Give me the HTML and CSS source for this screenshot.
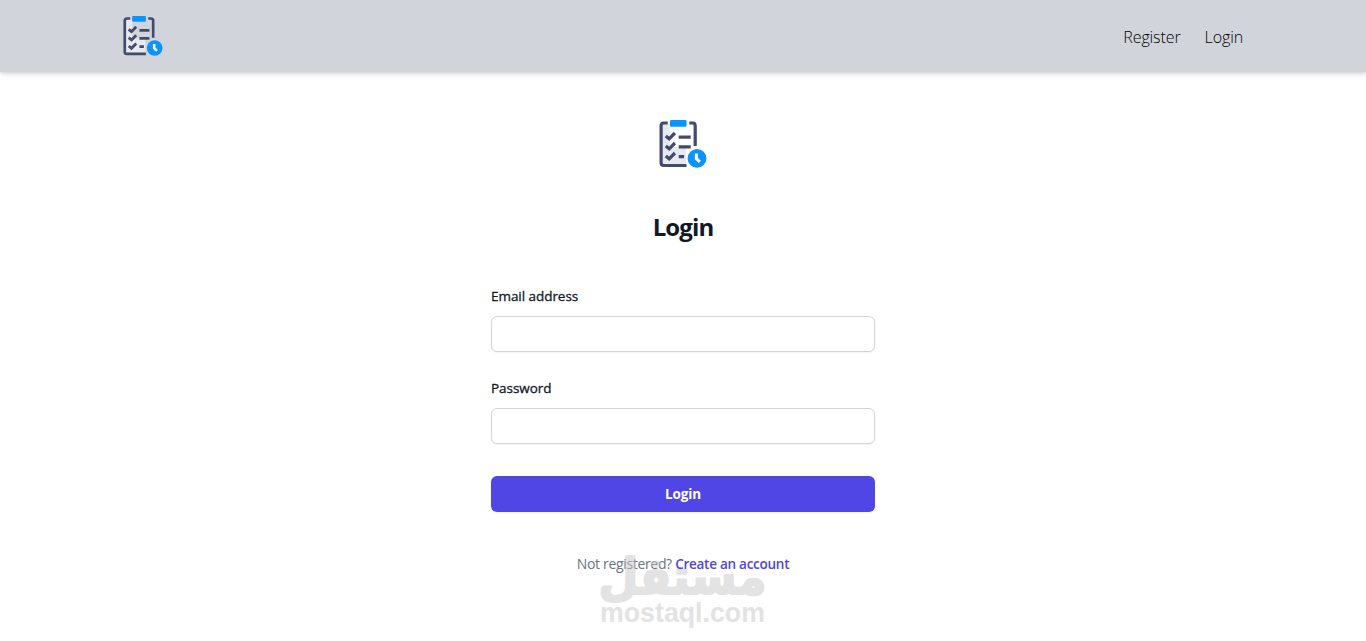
FILE: index.html
```
<!DOCTYPE html>
<html lang="en">
<head>
    <meta charset="UTF-8">
    <meta name="viewport" content="width=device-width, initial-scale=1.0">
    <title>Login</title>
    <link rel="stylesheet" href="styles.css">
</head>
<body>
    <svg class="sprite" aria-hidden="true">
        <symbol id="logo" viewBox="0 0 48 48">
            <path d="M3 4h8v23h16v17H3z" fill="#e6e9ee"/>
            <path d="M8.7 3H4.8Q2.1 3 2.1 5.7V42.8Q2.1 45.5 4.8 45.5H27.5M30.3 3H33.5Q36.2 3 36.2 5.7V26" fill="none" stroke="#414b6e" stroke-width="3.2"/>
            <rect x="11" y="0" width="16.5" height="6.8" rx="1.2" fill="#0a94ff"/>
            <path d="M6.8 16l3.4 2.8 5.7-5.8M6.8 26l3.4 2.8 5.7-5.8M6.8 36l3.4 2.8 5.7-5.8M19.7 17.2h12M19.7 26.8h12M19.7 36.7h5.4" fill="none" stroke="#414b6e" stroke-width="3.3"/>
            <circle cx="38" cy="38.4" r="9.4" fill="#0a94ff"/>
            <path d="M37.4 33.6v5l3.4 3.2" fill="none" stroke="#fff" stroke-width="3"/>
        </symbol>
    </svg>

    <header class="header">
        <div class="header-inner">
            <a href="#" class="header-logo" aria-label="Home"><svg><use href="#logo"/></svg></a>
            <nav class="nav">
                <a href="#">Register</a>
                <a href="#">Login</a>
            </nav>
        </div>
    </header>

    <main class="login">
        <svg class="login-logo"><use href="#logo"/></svg>
        <h2>Login</h2>
        <form class="form">
            <div class="field">
                <label for="email">Email address</label>
                <input id="email" type="email">
            </div>
            <div class="field">
                <label for="password">Password</label>
                <input id="password" type="password">
            </div>
            <button type="button" class="button">Login</button>
        </form>
        <p class="signup"><span>Not registered?</span> <a href="#">Create an account</a></p>
    </main>

    <!-- Watermark -->
    <svg class="watermark" viewBox="0 0 170 80">
        <text class="watermark-ar" transform="translate(82.5 43) scale(1 1.08)" text-anchor="middle">مستقل</text>
        <text class="watermark-en" x="0" y="71" textLength="165" lengthAdjust="spacingAndGlyphs">mostaql.com</text>
    </svg>
</body>
</html>
```
FILE: styles.css
```
* {
    box-sizing: border-box;
}

body {
    margin: 0;
    height: 641px;
    overflow: hidden;
    position: relative;
    font-family: "Open Sans", "Noto Sans", sans-serif;
    background-color: #fff;
    color: #111827;
}

a {
    color: inherit;
    text-decoration: none;
}

.sprite {
    position: absolute;
    width: 0;
    height: 0;
}

.header {
    height: 72px;
    background-color: #d1d5db;
    box-shadow: 0 1px 3px rgba(0, 0, 0, 0.1), 0 4px 6px -1px rgba(0, 0, 0, 0.1);
}

.header-inner {
    width: 1120px;
    height: 72px;
    margin: 0 auto;
    display: flex;
    justify-content: space-between;
    align-items: center;
}

.header-logo svg {
    display: block;
    width: 40px;
    height: 40px;
}

.nav {
    display: flex;
    gap: 24px;
    padding-top: 2px;
    font-size: 16px;
    font-weight: 300;
    line-height: 24px;
    letter-spacing: -0.1px;
    color: #000;
}

.login {
    width: 384px;
    margin: 0 auto;
    padding-top: 48px;
}

.login-logo {
    display: block;
    width: 48px;
    height: 48px;
    margin: 0 auto;
}

h2 {
    margin: 41px 0 0;
    font-size: 24px;
    line-height: 36px;
    font-weight: 700;
    letter-spacing: -0.9px;
    text-align: center;
}

.form {
    margin-top: 39px;
    display: flex;
    flex-direction: column;
    gap: 24px;
}

.field {
    display: flex;
    flex-direction: column;
    gap: 8px;
}

label {
    font-size: 13.5px;
    line-height: 24px;
    font-weight: 500;
    letter-spacing: -0.05px;
    -webkit-text-stroke: 0.3px;
}

input {
    height: 36px;
    padding: 6px 12px;
    border: 1px solid #d1d5db;
    border-radius: 6px;
    box-shadow: 0 1px 2px rgba(0, 0, 0, 0.05);
    outline: none;
}

.button {
    height: 36px;
    margin-top: 8px;
    padding: 0;
    border: none;
    border-radius: 6px;
    background-color: #4f46e5;
    color: #fff;
    font-family: inherit;
    font-size: 13.5px;
    line-height: 24px;
    font-weight: 700;
    letter-spacing: -0.1px;
    box-shadow: 0 1px 2px rgba(0, 0, 0, 0.05);
}

.signup {
    margin: 40px 0 0;
    font-size: 14px;
    line-height: 24px;
    letter-spacing: -0.33px;
    text-align: center;
    color: #6b7280;
}

.signup a {
    font-size: 13.5px;
    font-weight: 600;
    letter-spacing: -0.26px;
    color: #4f46e5;
}

.watermark {
    position: absolute;
    left: 600px;
    top: 551px;
    width: 170px;
    height: 80px;
    overflow: visible;
    fill: #c8c8c8;
    opacity: 0.5;
    pointer-events: none;
}

.watermark-ar {
    font-family: "DejaVu Sans", sans-serif;
    font-size: 46px;
    font-weight: 700;
    stroke: #c8c8c8;
    stroke-width: 2px;
    stroke-linejoin: round;
}

.watermark-en {
    font-family: "Liberation Sans", sans-serif;
    font-size: 27px;
    font-weight: 700;
}
```
